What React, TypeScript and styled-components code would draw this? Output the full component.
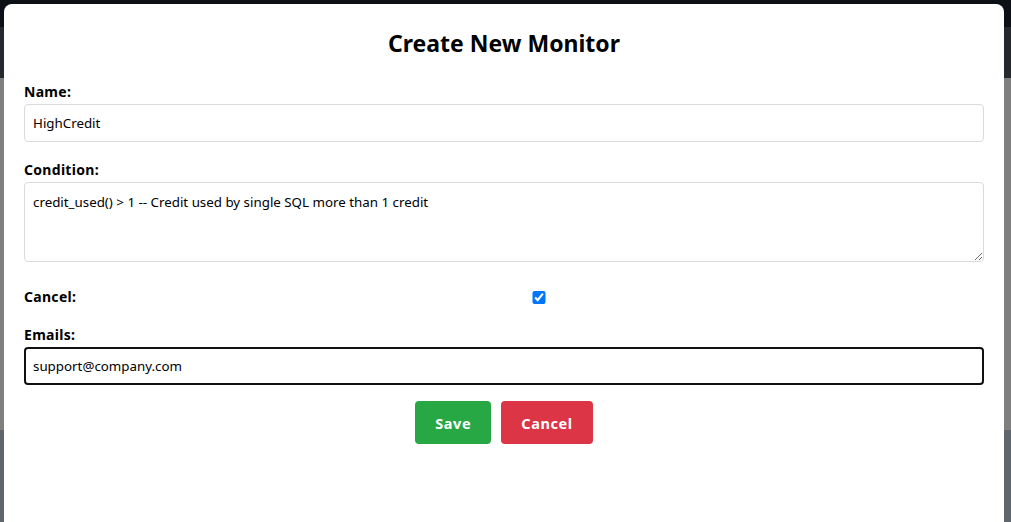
import React from "react";
import styled, { createGlobalStyle } from "styled-components";

const Global = createGlobalStyle`
  html, body { margin: 0; padding: 0; height: 100%; overflow: hidden; }
  body { font-family: "Noto Sans", "Open Sans", sans-serif; background: #7f7f7f; color: #000; }
  * { box-sizing: border-box; }
`;

const Page = styled.div`
  height: 522px;
  display: flex;
  flex-direction: column;
`;

const Band = styled.div<{ $h?: number; $bg: string }>`
  flex: ${(p) => (p.$h ? `0 0 ${p.$h}px` : "1 1 auto")};
  background: ${(p) => p.$bg};
`;

const Overlay = styled.div`
  position: fixed;
  inset: 0;
  display: flex;
  justify-content: center;
  align-items: flex-start;
  padding-top: 4px;
`;

const Modal = styled.div`
  width: 1000px;
  height: 560px;
  background: #fff;
  border-radius: 8px;
  padding: 20px;
  margin-left: -3px;
`;

const Title = styled.h2`
  margin: 3px 0 23px;
  font-size: 23px;
  line-height: 32px;
  font-weight: 700;
  text-align: center;
`;

const Group = styled.div<{ $mb?: number }>`
  margin-bottom: ${(p) => p.$mb ?? 18}px;
`;

const Label = styled.label`
  display: block;
  font-size: 14px;
  line-height: 20px;
  font-weight: 700;
  letter-spacing: 0.3px;
  margin-bottom: 2px;
`;

const TextInput = styled.input<{ $focused?: boolean }>`
  display: block;
  width: 100%;
  height: 38px;
  padding: 0 ${(p) => (p.$focused ? 7 : 8)}px;
  border: ${(p) => (p.$focused ? "2px solid #111" : "1px solid #dadada")};
  border-radius: 4px;
  font-family: inherit;
  font-size: 13.33px;
  color: #000;
  background: #fff;
  outline: none;
`;

const TextArea = styled.textarea`
  display: block;
  width: 100%;
  height: 80px;
  padding: 10px 8px 8px;
  border: 1px solid #dadada;
  border-radius: 4px;
  font-family: inherit;
  font-size: 13.33px;
  line-height: 18px;
  color: #000;
  background: #fff;
  outline: none;
  margin-bottom: 25px;
`;

const CheckRow = styled.div`
  display: flex;
  align-items: center;
  height: 20px;
  margin-bottom: 18px;
`;

const CheckLabel = styled(Label)`
  flex: 0 0 70px;
  margin-bottom: 0;
`;

const CheckBox = styled.input`
  flex: 1 1 auto;
  height: 13px;
  margin: 3px 0;
  accent-color: #0075ff;
`;

const Actions = styled.div`
  display: flex;
  justify-content: center;
  gap: 10px;
`;

const Button = styled.button<{ $variant: "save" | "cancel" }>`
  height: 43px;
  padding: 0 20px;
  border: none;
  border-radius: 4px;
  font-family: inherit;
  font-size: 14.5px;
  font-weight: 700;
  letter-spacing: 0.6px;
  color: #fff;
  background: ${(p) => (p.$variant === "save" ? "#28a745" : "#dc3545")};
  cursor: pointer;
`;

export default function App() {
  return (
    <>
      <Global />
      <Page>
        <Band $h={27} $bg="#0d1117" />
        <Band $h={51} $bg="#25292d" />
        <Band $h={352} $bg="#7f7f7f" />
        <Band $bg="#5f666e" />
      </Page>
      <Overlay>
        <Modal>
          <Title>Create New Monitor</Title>
          <Group>
            <Label>Name:</Label>
            <TextInput defaultValue="HighCredit" />
          </Group>
          <Group $mb={0}>
            <Label>Condition:</Label>
            <TextArea
              spellCheck={false}
              defaultValue="credit_used() > 1 -- Credit used by single SQL more than 1 credit"
            />
          </Group>
          <CheckRow>
            <CheckLabel>Cancel:</CheckLabel>
            <CheckBox type="checkbox" defaultChecked />
          </CheckRow>
          <Group $mb={16}>
            <Label>Emails:</Label>
            <TextInput $focused defaultValue="support@company.com" />
          </Group>
          <Actions>
            <Button $variant="save">Save</Button>
            <Button $variant="cancel">Cancel</Button>
          </Actions>
        </Modal>
      </Overlay>
    </>
  );
}
